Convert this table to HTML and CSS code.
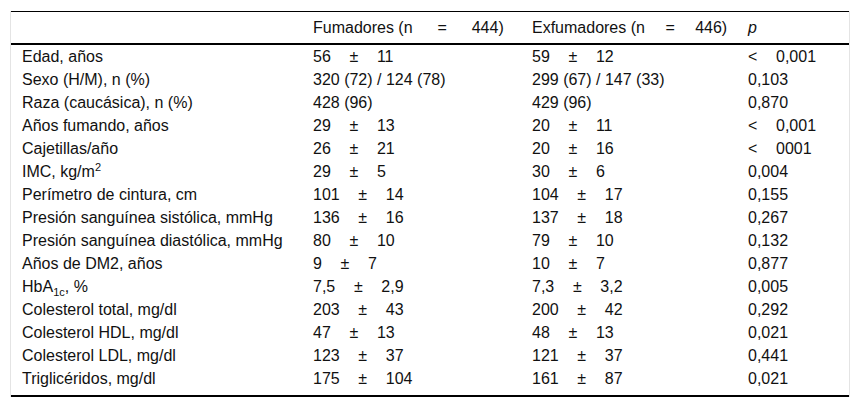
FILE: index.html
```html
<!DOCTYPE html>
<html lang="es">
<head>
<meta charset="utf-8">
<title>Tabla</title>
<link rel="stylesheet" href="styles.css">
</head>
<body>
<div class="wrap">
<table class="tbl">
<colgroup>
<col class="c1"><col class="c2"><col class="c3"><col class="c4">
</colgroup>
<thead>
<tr><th></th><th>Fumadores (n &emsp; = &emsp; 444)</th><th>Exfumadores (n &emsp;=&emsp; 446)</th><th><i>p</i></th></tr>
</thead>
<tbody>
<tr><td>Edad, años</td><td>56&emsp;&#8198;±&emsp;&#8198;11</td><td>59&emsp;&#8198;±&emsp;&#8198;12</td><td>&lt;&emsp;&#8198;0,001</td></tr>
<tr><td>Sexo (H/M), n (%)</td><td>320 (72) / 124 (78)</td><td>299 (67) / 147 (33)</td><td>0,103</td></tr>
<tr><td>Raza (caucásica), n (%)</td><td>428 (96)</td><td>429 (96)</td><td>0,870</td></tr>
<tr><td>Años fumando, años</td><td>29&emsp;&#8198;±&emsp;&#8198;13</td><td>20&emsp;&#8198;±&emsp;&#8198;11</td><td>&lt;&emsp;&#8198;0,001</td></tr>
<tr><td>Cajetillas/año</td><td>26&emsp;&#8198;±&emsp;&#8198;21</td><td>20&emsp;&#8198;±&emsp;&#8198;16</td><td>&lt;&emsp;&#8198;0001</td></tr>
<tr><td>IMC, kg/m<sup>2</sup></td><td>29&emsp;&#8198;±&emsp;&#8198;5</td><td>30&emsp;&#8198;±&emsp;&#8198;6</td><td>0,004</td></tr>
<tr><td>Perímetro de cintura, cm</td><td>101&emsp;&#8198;±&emsp;&#8198;14</td><td>104&emsp;&#8198;±&emsp;&#8198;17</td><td>0,155</td></tr>
<tr><td>Presión sanguínea sistólica, mmHg</td><td>136&emsp;&#8198;±&emsp;&#8198;16</td><td>137&emsp;&#8198;±&emsp;&#8198;18</td><td>0,267</td></tr>
<tr><td>Presión sanguínea diastólica, mmHg</td><td>80&emsp;&#8198;±&emsp;&#8198;10</td><td>79&emsp;&#8198;±&emsp;&#8198;10</td><td>0,132</td></tr>
<tr><td>Años de DM2, años</td><td>9&emsp;&#8198;±&emsp;&#8198;7</td><td>10&emsp;&#8198;±&emsp;&#8198;7</td><td>0,877</td></tr>
<tr><td>HbA<sub>1c</sub>, %</td><td>7,5&emsp;&#8198;±&emsp;&#8198;2,9</td><td>7,3&emsp;&#8198;±&emsp;&#8198;3,2</td><td>0,005</td></tr>
<tr><td>Colesterol total, mg/dl</td><td>203&emsp;&#8198;±&emsp;&#8198;43</td><td>200&emsp;&#8198;±&emsp;&#8198;42</td><td>0,292</td></tr>
<tr><td>Colesterol HDL, mg/dl</td><td>47&emsp;&#8198;±&emsp;&#8198;13</td><td>48&emsp;&#8198;±&emsp;&#8198;13</td><td>0,021</td></tr>
<tr><td>Colesterol LDL, mg/dl</td><td>123&emsp;&#8198;±&emsp;&#8198;37</td><td>121&emsp;&#8198;±&emsp;&#8198;37</td><td>0,441</td></tr>
<tr class="last"><td>Triglicéridos, mg/dl</td><td>175&emsp;&#8198;±&emsp;&#8198;104</td><td>161&emsp;&#8198;±&emsp;&#8198;87</td><td>0,021</td></tr>
</tbody>
</table>
</div>
</body>
</html>
```
FILE: styles.css
```css
html, body {
  margin: 0;
  padding: 0;
  background: #fff;
}
body {
  font-family: "Liberation Sans", Arial, sans-serif;
  font-size: 16px;
  color: #111;
}
.wrap {
  margin: 11px 0 0 10px;
  width: 838px;
  border-left: 1px solid #e4e4e4;
  border-right: 1px solid #e4e4e4;
}
.tbl {
  width: 100%;
  border-collapse: collapse;
  table-layout: fixed;
}
.c1 { width: 291px; }
.c2 { width: 219px; }
.c3 { width: 216px; }
.c4 { width: 112px; }
.tbl th, .tbl td {
  text-align: left;
  font-weight: normal;
  padding: 2px 0 2px 11px;
  line-height: 19px;
  white-space: nowrap;
  vertical-align: middle;
}
.tbl th {
  padding-top: 6px;
  padding-bottom: 6px;
}
.tbl thead tr {
  border-top: 1px solid #000;
  border-bottom: 2px solid #000;
}
.tbl tbody tr.last {
  border-bottom: 2px solid #000;
}
.tbl tbody tr.last td {
  padding-bottom: 7px;
}
.tbl sup, .tbl sub {
  font-size: 11px;
  line-height: 0;
}
```
